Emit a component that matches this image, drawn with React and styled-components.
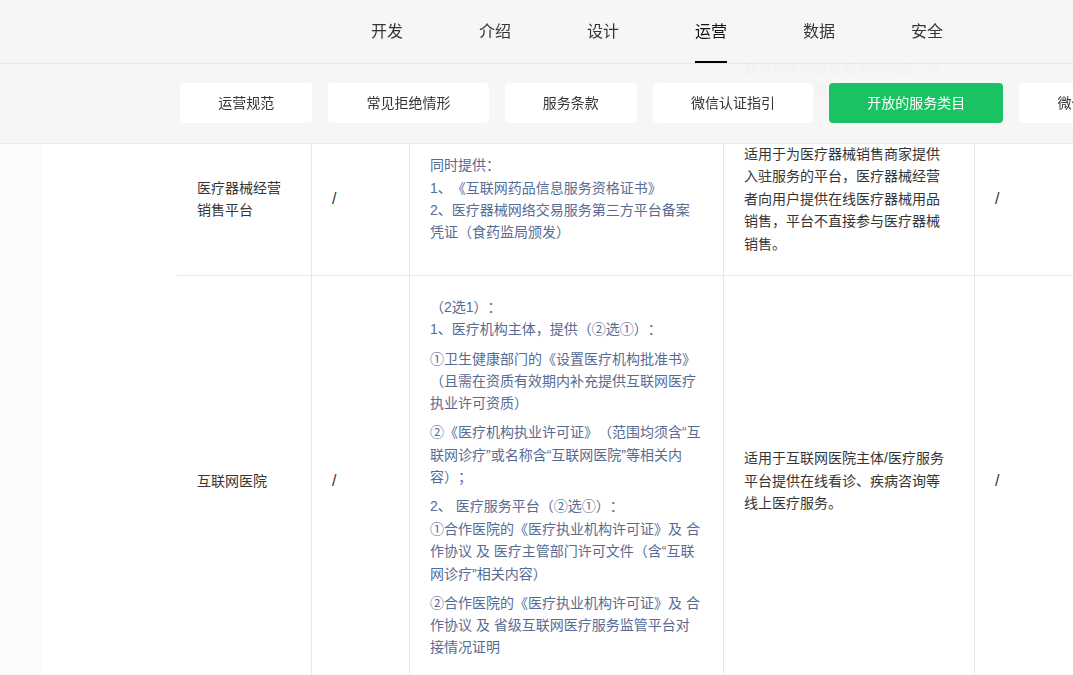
import React from "react";
import styled, { createGlobalStyle } from "styled-components";

const Global = createGlobalStyle`
  html, body { margin: 0; padding: 0; background: #fff; }
  * { box-sizing: border-box; }
  body {
    font-family: "Liberation Sans", "Noto Sans CJK SC", sans-serif;
    text-spacing-trim: space-all;
  }
`;

const Page = styled.div`
  position: relative;
  width: 1073px;
  height: 675px;
  overflow: hidden;
  display: flex;
  background: #fff;
`;

const Gutter = styled.div`
  flex: 0 0 43px;
  background: #fbfbfb;
`;

const Main = styled.main`
  flex: 1;
  min-width: 0;
  padding-left: 134px;
`;

const Overlay = styled.header`
  position: absolute;
  inset: 0 0 auto 0;
  z-index: 2;
  height: 144px;
  background: rgba(246, 246, 246, 0.975);
  backdrop-filter: blur(0.5px);
  border-bottom: 1px solid #ececec;
`;

const TopNav = styled.nav`
  height: 64px;
  display: flex;
  gap: 76px;
  padding-left: 371px;
  border-bottom: 1px solid #e7e7e7;
`;

const NavItem = styled.a`
  position: relative;
  height: 63px;
  font-size: 16px;
  line-height: 63px;
  color: ${p => (p.$active ? "#111" : "#353535")};
  &::after {
    content: "";
    display: ${p => (p.$active ? "block" : "none")};
    position: absolute;
    left: 0;
    right: 0;
    bottom: 0;
    height: 2px;
    background: #000;
  }
`;

const SubNav = styled.div`
  display: flex;
  gap: 16px;
  padding: 19px 0 0 180px;
`;

const SubButton = styled.a`
  flex: 0 0 auto;
  height: 40px;
  padding: 0 38.15px;
  border-radius: 4px;
  font-size: 14px;
  line-height: 40px;
  white-space: nowrap;
  background: ${p => (p.$active ? "#1bc263" : "#fff")};
  color: ${p => (p.$active ? "#fff" : "#353535")};
`;

const Table = styled.table`
  table-layout: fixed;
  border-collapse: separate;
  border-spacing: 0;
  width: 1000px;
  font-size: 14px;
  line-height: 22.4px;
  color: #353535;
`;

const Cell = styled.td`
  padding: 20px ${p => (p.$narrow ? "24px" : "20px")} 20px 20px;
  vertical-align: middle;
  border-right: 1px solid #e7e7e7;
  border-bottom: 1px solid #e7e7e7;
  color: ${p => (p.$link ? "#576b95" : "#353535")};
  &:last-child { border-right: 0; }
  p { margin: 0 0 6.7px; }
`;

const GhostCell = styled.td`
  height: 123px;
  padding: 57px 24px 0 20px;
  vertical-align: top;
  overflow: hidden;
  border-right: 1px solid #e7e7e7;
  border-bottom: 1px solid #e7e7e7;
  color: #353535;
  &:last-child { border-right: 0; }
`;

const Slash = styled.span`
  font-size: 16px;
`;

const nav = ["开发", "介绍", "设计", "运营", "数据", "安全"];
const subs = ["运营规范", "常见拒绝情形", "服务条款", "微信认证指引", "开放的服务类目", "微信小程序"];

export default function App() {
  return (
    <Page>
      <Global />
      <Gutter />
      <Main>
        <Table>
          <colgroup>
            <col style={{ width: 135 }} />
            <col style={{ width: 98 }} />
            <col style={{ width: 314 }} />
            <col style={{ width: 251 }} />
            <col style={{ width: 202 }} />
          </colgroup>
          <tbody>
            <tr>
              <GhostCell />
              <GhostCell />
              <GhostCell />
              <GhostCell>及其他类似或者相关的物品，包括但不限于统计设备等</GhostCell>
              <GhostCell />
            </tr>
            <tr>
              <Cell>医疗器械经营销售平台</Cell>
              <Cell><Slash>/</Slash></Cell>
              <Cell $link>
                同时提供：<br />
                1、《互联网药品信息服务资格证书》<br />
                2、医疗器械网络交易服务第三方平台备案凭证（食药监局颁发）
              </Cell>
              <Cell $narrow>适用于为医疗器械销售商家提供入驻服务的平台，医疗器械经营者向用户提供在线医疗器械用品销售，平台不直接参与医疗器械销售。</Cell>
              <Cell><Slash>/</Slash></Cell>
            </tr>
            <tr>
              <Cell>互联网医院</Cell>
              <Cell><Slash>/</Slash></Cell>
              <Cell $link>
                <p>（2选1）：<br />1、医疗机构主体，提供（②选①）：</p>
                <p>①卫生健康部门的《设置医疗机构批准书》（且需在资质有效期内补充提供互联网医疗执业许可资质）</p>
                <p>②《医疗机构执业许可证》（范围均须含“互联网诊疗”或名称含“互联网医院”等相关内容）；</p>
                <p>2、 医疗服务平台（②选①）：<br />①合作医院的《医疗执业机构许可证》及 合作协议 及 医疗主管部门许可文件（含“互联网诊疗”相关内容）</p>
                <p>②合作医院的《医疗执业机构许可证》及 合作协议 及 省级互联网医疗服务监管平台对接情况证明</p>
              </Cell>
              <Cell $narrow>适用于互联网医院主体/医疗服务平台提供在线看诊、疾病咨询等线上医疗服务。</Cell>
              <Cell><Slash>/</Slash></Cell>
            </tr>
          </tbody>
        </Table>
      </Main>
      <Overlay>
        <TopNav>
          {nav.map(n => <NavItem key={n} $active={n === "运营"}>{n}</NavItem>)}
        </TopNav>
        <SubNav>
          {subs.map(s => <SubButton key={s} $active={s === "开放的服务类目"}>{s}</SubButton>)}
        </SubNav>
      </Overlay>
    </Page>
  );
}
